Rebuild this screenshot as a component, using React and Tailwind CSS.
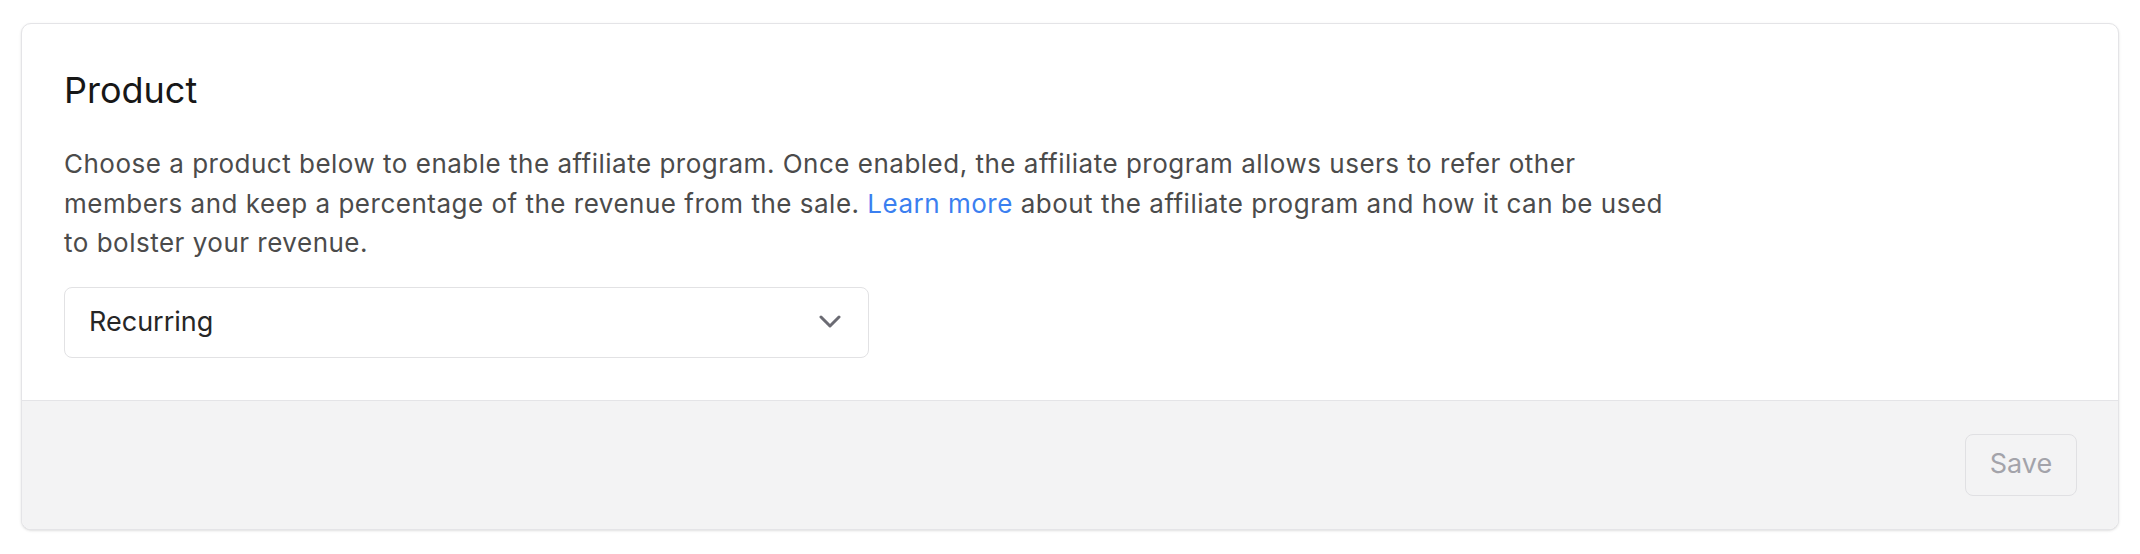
export default function App() {
  return (
    <div className="min-h-screen bg-white px-[21px] pt-[23px] font-['Inter',sans-serif]">
      <section className="overflow-hidden rounded-[10px] border border-[#e4e4e7] bg-white shadow-sm">
        {/* Body */}
        <div className="p-[42px]">
          <h2 className="text-[36px] leading-[48px] text-[#171717]">Product</h2>
          <p className="mt-[30px] max-w-[1620px] text-[26px] leading-[39.5px] tracking-[0.5px] text-[#4b4b4b]">
            Choose a product below to enable the affiliate program. Once enabled, the affiliate program allows users to refer other members and keep a percentage of the revenue from the sale.{' '}
            <a href="#" className="text-[#3b7ff0]">Learn more</a> about the affiliate program and how it can be used to bolster your revenue.
          </p>
          <button className="mt-[24px] flex h-[71px] w-[805px] items-center justify-between rounded-[8px] border border-[#e2e2e4] bg-white pl-[24px] pr-[27px] text-left">
            <span className="text-[27px] text-[#262626]">Recurring</span>
            <svg width="22" height="14" viewBox="0 0 22 14" fill="none" stroke="#6b6b73" strokeWidth="3" strokeLinecap="round" strokeLinejoin="round">
              <path d="M2 2l9 9 9-9" />
            </svg>
          </button>
        </div>

        {/* Footer */}
        <div className="flex h-[129px] items-center justify-end border-t border-[#e4e4e7] bg-[#f3f3f4] px-[41px]">
          <button disabled className="h-[62px] w-[112px] rounded-[8px] border border-[#e0e0e3] text-[27px] text-[#a3a3aa]">
            Save
          </button>
        </div>
      </section>
    </div>
  );
}
